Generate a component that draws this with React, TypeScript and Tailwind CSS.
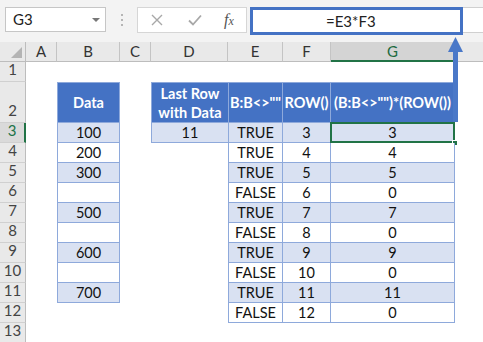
import React from "react"

type Cell = { text?: string; fill?: "head" | "band" | "plain"; lines?: string }

const COLS = "grid-cols-[26px_31px_63px_31px_77px_55px_48px_124px_1fr]"

const colLetters = ["A", "B", "C", "D", "E", "F", "G"]

const bValues = ["100", "200", "300", "", "500", "", "600", "", "700"]
const eValues = ["TRUE", "TRUE", "TRUE", "FALSE", "TRUE", "FALSE", "TRUE", "FALSE", "TRUE", "FALSE"]
const gValues = ["3", "4", "5", "0", "7", "0", "9", "0", "11", "0"]

const fillClass = (fill?: Cell["fill"]) => {
    if (fill === "head") return "bg-[#4472c4] text-white font-bold"
    if (fill === "band") return "bg-[#d9e1f2] text-[#111]"
    if (fill === "plain") return "bg-white text-[#111]"
    return ""
}

const TableCell = ({ cell, children }: { cell: Cell; children?: React.ReactNode }) => (
    <div
        className={`relative flex items-center justify-center text-center text-[14.5px] leading-[17px] whitespace-nowrap border-[#8ea9db] ${fillClass(cell.fill)} ${cell.lines ?? ""}`}
    >
        {cell.text}
        {children}
    </div>
)

const RowHead = ({ n, active }: { n: number; active?: boolean }) => (
    <div
        className={`flex items-end justify-center pb-px border-b border-[#d0d0d0] ${
            active
                ? "bg-[#dadada] text-[#217346] border-r-2 border-r-[#217346]"
                : "bg-[#e9e9e9] text-[#444] border-r border-r-[#bdbdbd]"
        }`}
    >
        {n}
    </div>
)

export default function App() {
    const rows: number[] = [1, 2, 3, 4, 5, 6, 7, 8, 9, 10, 11, 12, 13]

    const cellsFor = (r: number) => {
        const band = r % 2 === 1 ? "band" : "plain"
        let b: Cell = {}
        let d: Cell = {}
        let e: Cell = {}
        let f: Cell = {}
        let g: Cell = {}

        if (r === 2) {
            b = { text: "Data", fill: "head", lines: "border-l border-r border-t border-b" }
            d = { text: "", fill: "head", lines: "border-l border-t border-b" }
            e = { text: 'B:B<>""', fill: "head", lines: "border-l border-r border-t border-b" }
            f = { text: "ROW()", fill: "head", lines: "border-r border-t border-b" }
            g = { text: '(B:B<>"")*(ROW())', fill: "head", lines: "border-r border-t border-b" }
        } else if (r >= 3 && r <= 12) {
            if (r <= 11) b = { text: bValues[r - 3], fill: band, lines: "border-l border-r border-b" }
            if (r === 3) d = { text: "11", fill: "band", lines: "border-l border-b" }
            e = { text: eValues[r - 3], fill: band, lines: "border-l border-r border-b" }
            f = { text: String(r), fill: band, lines: "border-r border-b" }
            g = { text: gValues[r - 3], fill: band, lines: "border-r border-b" }
        }
        return { b, d, e, f, g }
    }

    return (
        <div className="relative w-[483px] h-[342px] overflow-hidden bg-white font-['Lato',sans-serif] text-[15px]">
            {/* toolbar */}
            <div className="flex items-start h-[42px] bg-[#f3f3f3] pt-[7px] pl-[5px]">
                <div className="flex items-center justify-between w-[101px] h-[25px] bg-white border border-[#c6c6c6] pl-[7px] pr-[5px] text-[#222]">
                    <span>G3</span>
                    <span className="w-0 h-0 border-l-[4px] border-r-[4px] border-t-[4px] border-l-transparent border-r-transparent border-t-[#777]" />
                </div>
                <div className="flex flex-col gap-[3px] ml-[15px] mt-[7px]">
                    <span className="w-[2px] h-[2px] bg-[#b5b5b5]" />
                    <span className="w-[2px] h-[2px] bg-[#b5b5b5]" />
                    <span className="w-[2px] h-[2px] bg-[#b5b5b5]" />
                </div>
                <div className="flex items-center w-[110px] h-[26px] ml-[14px] bg-white border border-[#d6d6d6]">
                    <svg className="ml-[13px]" width="12" height="12" viewBox="0 0 12 12">
                        <path d="M1 1 L11 11 M11 1 L1 11" stroke="#a8a8a8" strokeWidth="1.4" />
                    </svg>
                    <svg className="ml-[25px]" width="14" height="12" viewBox="0 0 14 12">
                        <path d="M1 6.5 L5 10.5 L13 1.5" stroke="#a8a8a8" strokeWidth="1.8" fill="none" />
                    </svg>
                    <span className="ml-[22px] font-['Liberation_Serif',serif] italic text-[16px] text-[#555]">
                        f<span className="text-[12px]">x</span>
                    </span>
                </div>
                <div className="flex-1 h-[26px] ml-[3px] bg-white border-y border-[#d0d0d0]">
                    <div className="w-[213px] h-[28px] -mt-px border-[3px] border-[#4472c4] flex items-center pl-[73px] text-[#222]">
                        =E3*F3
                    </div>
                </div>
            </div>

            {/* sheet */}
            <div className={`grid ${COLS} grid-rows-[20px_20px_41px_repeat(11,20px)]`}>
                {/* column headers */}
                <div className="relative bg-[#e9e9e9] border-r border-b border-[#bdbdbd]">
                    <svg className="absolute right-[3px] bottom-[3px]" width="11" height="11" viewBox="0 0 11 11">
                        <polygon points="11,0 11,11 0,11" fill="#b4b4b4" />
                    </svg>
                </div>
                {colLetters.map((c) =>
                    c === "G" ? (
                        <div key={c} className="flex items-center justify-center bg-[#d4d4d4] text-[#1d6b41] border-r border-[#bdbdbd] border-b-2 border-b-[#217346]">
                            {c}
                        </div>
                    ) : (
                        <div key={c} className="flex items-center justify-center bg-[#e9e9e9] text-[#333] border-r border-b border-[#c4c4c4] border-b-[#bdbdbd]">
                            {c}
                        </div>
                    )
                )}
                <div className="bg-[#e9e9e9] border-b border-[#bdbdbd]" />

                {rows.map((r) => {
                    const { b, d, e, f, g } = cellsFor(r)
                    return (
                        <React.Fragment key={r}>
                            <RowHead n={r} active={r === 3} />
                            <div />
                            <TableCell cell={b} />
                            <div />
                            <TableCell cell={d}>
                                {r === 2 && (
                                    <span className="leading-[19px]">
                                        Last Row
                                        <br />
                                        with Data
                                    </span>
                                )}
                            </TableCell>
                            <TableCell cell={e} />
                            <TableCell cell={f} />
                            <TableCell cell={g}>
                                {r === 3 && (
                                    <>
                                        <span className="absolute -top-px -left-px -right-px -bottom-px border-2 border-[#217346]" />
                                        <span className="absolute -right-[4px] -bottom-[4px] w-[6px] h-[6px] bg-[#217346] border border-white" />
                                    </>
                                )}
                            </TableCell>
                            <div />
                        </React.Fragment>
                    )
                })}
            </div>

            {/* arrow to formula bar */}
            <svg className="absolute left-[446px] top-[35px]" width="20" height="90" viewBox="0 0 20 90">
                <polygon points="9.5,2 2,17 17,17" fill="#4a78c8" />
                <rect x="7" y="16" width="5" height="71" fill="#4a78c8" />
            </svg>
        </div>
    )
}
